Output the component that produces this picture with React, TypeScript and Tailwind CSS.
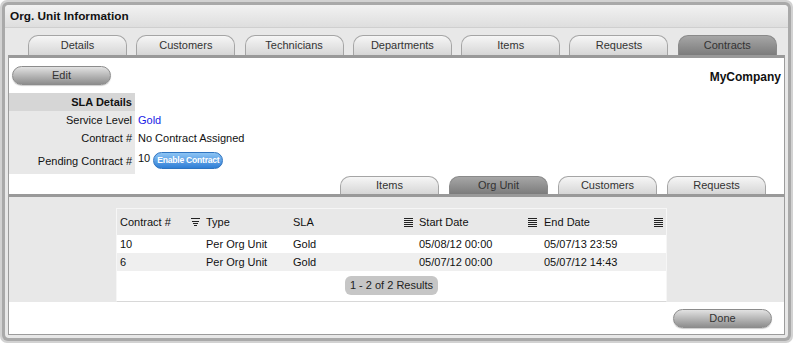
import React from 'react';

const mainTabs = ['Details', 'Customers', 'Technicians', 'Departments', 'Items', 'Requests', 'Contracts'];
const subTabs = ['Items', 'Org Unit', 'Customers', 'Requests'];

const rows = [
  { no: '10', type: 'Per Org Unit', sla: 'Gold', start: '05/08/12 00:00', end: '05/07/13 23:59' },
  { no: '6', type: 'Per Org Unit', sla: 'Gold', start: '05/07/12 00:00', end: '05/07/12 14:43' },
];

const Tab = ({ label, active, h }: { label: string; active?: boolean; h: string }) => (
  <div
    className={`${h} w-[99px] shrink-0 flex items-center justify-center rounded-t-[10px] border border-b-0 text-[11px] text-[#333] ${
      active
        ? 'border-[#8a8a8a] bg-gradient-to-b from-[#a6a6a6] to-[#7c7c7c]'
        : 'border-[#a5a5a5] bg-gradient-to-b from-[#f6f6f6] to-[#d6d6d6]'
    }`}
  >
    {label}
  </div>
);

const GrayButton = ({ label }: { label: string }) => (
  <div className="h-[19px] w-[99px] flex items-center justify-center rounded-full border border-[#8c8c8c] bg-gradient-to-b from-[#e2e2e2] to-[#8e8e8e] text-[11px] text-[#333] shadow-[0_1px_1px_rgba(0,0,0,0.2)]">
    {label}
  </div>
);

const ListIcon = () => (
  <svg width="9" height="9" viewBox="0 0 9 9" className="shrink-0">
    {[0.5, 2.5, 4.5, 6.5, 8.5].map((y) => (
      <line key={y} x1="0" x2="9" y1={y} y2={y} stroke="#222" strokeWidth="1" />
    ))}
  </svg>
);

const FilterIcon = () => (
  <svg width="9" height="9" viewBox="0 0 9 9" className="shrink-0">
    <line x1="0" x2="9" y1="0.5" y2="0.5" stroke="#222" strokeWidth="1" />
    <line x1="1" x2="8" y1="3.5" y2="3.5" stroke="#222" strokeWidth="1" />
    <line x1="2" x2="7" y1="5.5" y2="5.5" stroke="#222" strokeWidth="1" />
    <line x1="3" x2="6" y1="7.5" y2="7.5" stroke="#222" strokeWidth="1" />
  </svg>
);

export default function App() {
  return (
    <div className="w-[793px] h-[343px] rounded-[7px] bg-[#d2d2d2] p-[2px] font-['Liberation_Sans',Arial,sans-serif] text-[#111]">
      <div className="h-full rounded-[6px] bg-[#a9a9a9] p-[3px]">
        <div className="h-full rounded-[4px] bg-[#e8e8e8] flex flex-col overflow-hidden">
          {/* title */}
          <div className="h-[23px] shrink-0 flex items-center px-[5px] pt-[2px] bg-gradient-to-b from-[#f2f2f2] to-[#dedede] border-b border-[#cfcfcf]">
            <span className="text-[11.8px] font-bold text-[#111]">Org. Unit Information</span>
          </div>

          <div className="flex-1 flex flex-col px-[3px] pb-[3px]">
            {/* main tabs */}
            <div className="h-[27px] shrink-0 flex items-end gap-[9.3px] pl-[20px]">
              {mainTabs.map((t) => (
                <Tab key={t} label={t} active={t === 'Contracts'} h="h-[20px]" />
              ))}
            </div>

            {/* content panel */}
            <div className="flex-1 flex flex-col border-x border-b border-[#9c9c9c] bg-white">
              <div className="h-[3px] bg-[#999]" />

              {/* top white section */}
              <div className="h-[136px] flex flex-col">
                <div className="flex justify-between items-start pt-[8px] pl-[3px] pr-[3px]">
                  <GrayButton label="Edit" />
                  <span className="mt-[2px] text-[12px] font-bold">MyCompany</span>
                </div>

                <div className="mt-[7px] w-[300px] text-[11px]">
                  <div className="flex h-[18px]">
                    <div className="w-[126px] bg-[#d6d6d6] flex items-center justify-end pr-[3px] font-bold">SLA Details</div>
                  </div>
                  <div className="flex h-[18px]">
                    <div className="w-[126px] bg-[#e8e8e8] flex items-center justify-end pr-[3px]">Service Level</div>
                    <div className="flex items-center pl-[3px] text-[#1a1ae6]">Gold</div>
                  </div>
                  <div className="flex h-[18px]">
                    <div className="w-[126px] bg-[#e8e8e8] flex items-center justify-end pr-[3px]">Contract #</div>
                    <div className="flex items-center pl-[3px]">No Contract Assigned</div>
                  </div>
                  <div className="flex h-[27px]">
                    <div className="w-[126px] bg-[#e8e8e8] flex items-center justify-end pr-[3px] pt-[2px]">Pending Contract #</div>
                    <div className="flex items-center pl-[3px] gap-[3px]">
                      <span className="-mt-[4px]">10</span>
                      <span className="h-[17px] px-[3px] flex items-center rounded-full border border-[#2f74c0] bg-gradient-to-b from-[#8cc4f4] to-[#2f7fd6] text-[8.5px] font-bold tracking-[-0.2px] text-white">
                        Enable Contract
                      </span>
                    </div>
                  </div>
                </div>

                <div className="mt-auto flex justify-end gap-[10px] pr-[18px]">
                  {subTabs.map((t) => (
                    <Tab key={t} label={t} active={t === 'Org Unit'} h="h-[18px]" />
                  ))}
                </div>
              </div>

              <div className="h-[3px] bg-[#999]" />

              {/* gray section with table */}
              <div className="h-[105px] bg-[#e8e8e8] pt-[11px] pl-[107px]">
                <div className="w-[551px] h-[94px] border border-[#f6f6f6] border-b-[#d8d8d8] bg-white text-[11px]">
                  <div className="flex h-[26px] bg-[#e8e8e8] items-center">
                    <div className="w-[86px] flex items-center justify-between pl-[3px] pr-[3px]">
                      <span>Contract #</span>
                      <FilterIcon />
                    </div>
                    <div className="w-[87px] pl-[3px]">Type</div>
                    <div className="w-[126px] flex items-center justify-between pl-[3px] pr-[3px]">
                      <span>SLA</span>
                      <ListIcon />
                    </div>
                    <div className="w-[125px] flex items-center justify-between pl-[3px] pr-[4px]">
                      <span>Start Date</span>
                      <ListIcon />
                    </div>
                    <div className="w-[125px] flex items-center justify-between pl-[3px] pr-[3px]">
                      <span>End Date</span>
                      <ListIcon />
                    </div>
                  </div>
                  {rows.map((r, i) => (
                    <div key={r.no} className={`flex h-[18px] items-center ${i % 2 ? 'bg-[#efefef]' : 'bg-white'}`}>
                      <div className="w-[86px] pl-[3px]">{r.no}</div>
                      <div className="w-[87px] pl-[3px]">{r.type}</div>
                      <div className="w-[126px] pl-[3px]">{r.sla}</div>
                      <div className="w-[125px] pl-[3px]">{r.start}</div>
                      <div className="w-[125px] pl-[3px]">{r.end}</div>
                    </div>
                  ))}
                  <div className="flex justify-center pt-[5px]">
                    <span className="h-[19px] px-[5px] flex items-center rounded-[6px] bg-[#c6c6c6] text-[#222]">1 - 2 of 2 Results</span>
                  </div>
                </div>
              </div>

              {/* bottom */}
              <div className="flex-1 flex justify-end items-start pt-[7px] pr-[12px]">
                <GrayButton label="Done" />
              </div>
            </div>
          </div>
        </div>
      </div>
    </div>
  );
}
